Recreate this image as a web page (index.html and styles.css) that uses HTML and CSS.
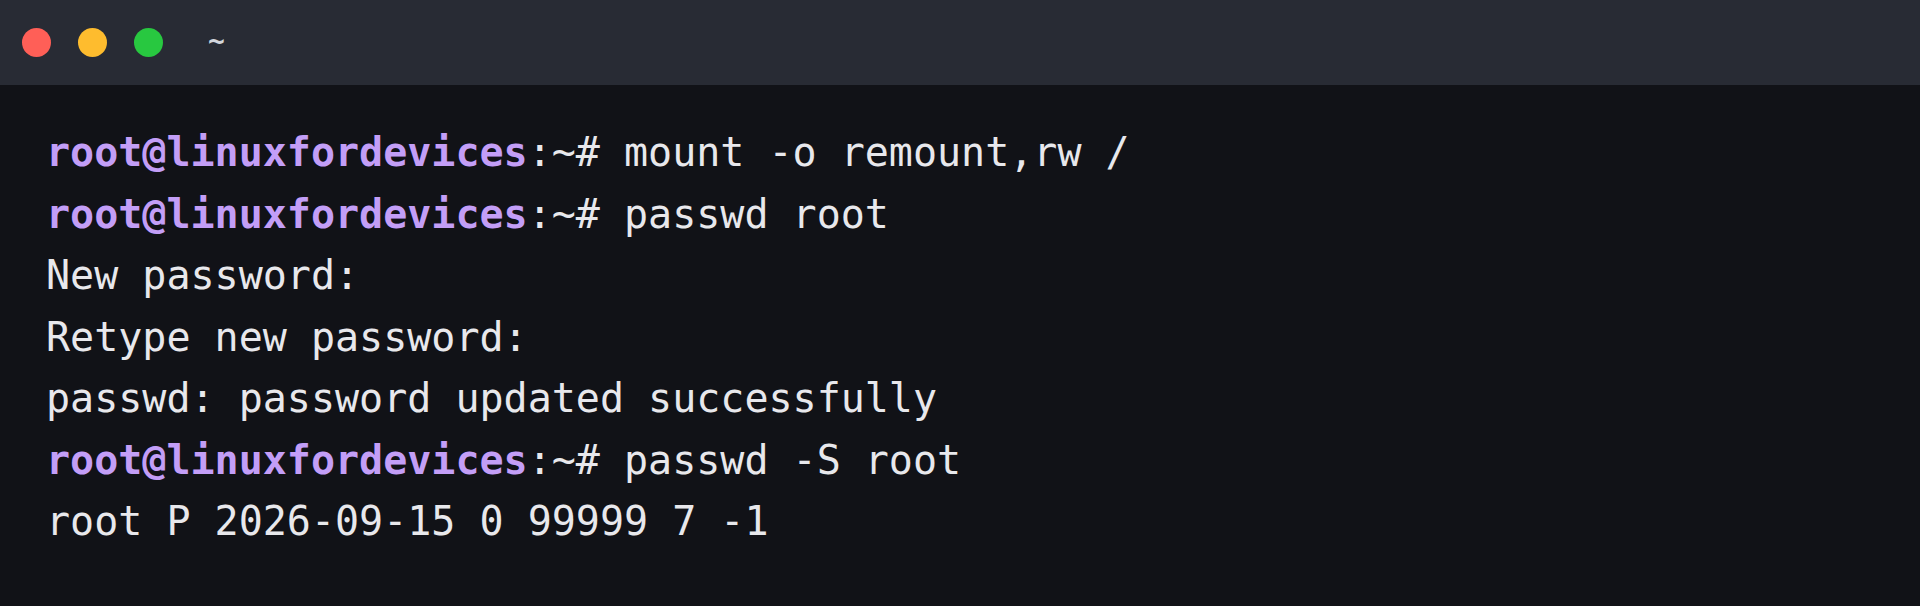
FILE: index.html
```html
<!DOCTYPE html>
<html>
<head>
<meta charset="utf-8">
<link rel="stylesheet" href="styles.css">
</head>
<body>
<div class="window">
  <div class="titlebar">
    <div class="dots">
      <span class="dot red"></span>
      <span class="dot yellow"></span>
      <span class="dot green"></span>
    </div>
    <span class="title">~</span>
  </div>
  <div class="term">
    <div class="line"><span class="prompt">root@linuxfordevices</span>:~# mount -o remount,rw /</div>
    <div class="line"><span class="prompt">root@linuxfordevices</span>:~# passwd root</div>
    <div class="line">New password:</div>
    <div class="line">Retype new password:</div>
    <div class="line">passwd: password updated successfully</div>
    <div class="line"><span class="prompt">root@linuxfordevices</span>:~# passwd -S root</div>
    <div class="line">root P 2026-09-15 0 99999 7 -1</div>
  </div>
</div>
</body>
</html>
```

FILE: styles.css
```css
html, body {
  margin: 0;
  padding: 0;
  background: #111217;
}
.window {
  width: 1920px;
  height: 606px;
  display: flex;
  flex-direction: column;
  background: #111217;
  overflow: hidden;
}
.titlebar {
  flex: 0 0 85px;
  height: 85px;
  background: #282b34;
  display: flex;
  align-items: center;
  padding-left: 22px;
  box-sizing: border-box;
}
.dots {
  display: flex;
  gap: 27px;
}
.dot {
  width: 29px;
  height: 29px;
  border-radius: 50%;
  display: block;
}
.red { background: #ff5f57; }
.yellow { background: #febc2e; }
.green { background: #28c840; }
.title {
  margin-left: 45px;
  margin-bottom: 5px;
  color: #d2d5dc;
  font-family: "DejaVu Sans Mono", monospace;
  font-size: 28px;
  font-weight: bold;
}
.term {
  padding: 37px 0 0 46px;
  font-family: "DejaVu Sans Mono", monospace;
  font-size: 40px;
  line-height: 61.5px;
  color: #e8e8ec;
}
.line {
  white-space: pre;
}
.prompt {
  color: #c39ef7;
  font-weight: bold;
}
```
